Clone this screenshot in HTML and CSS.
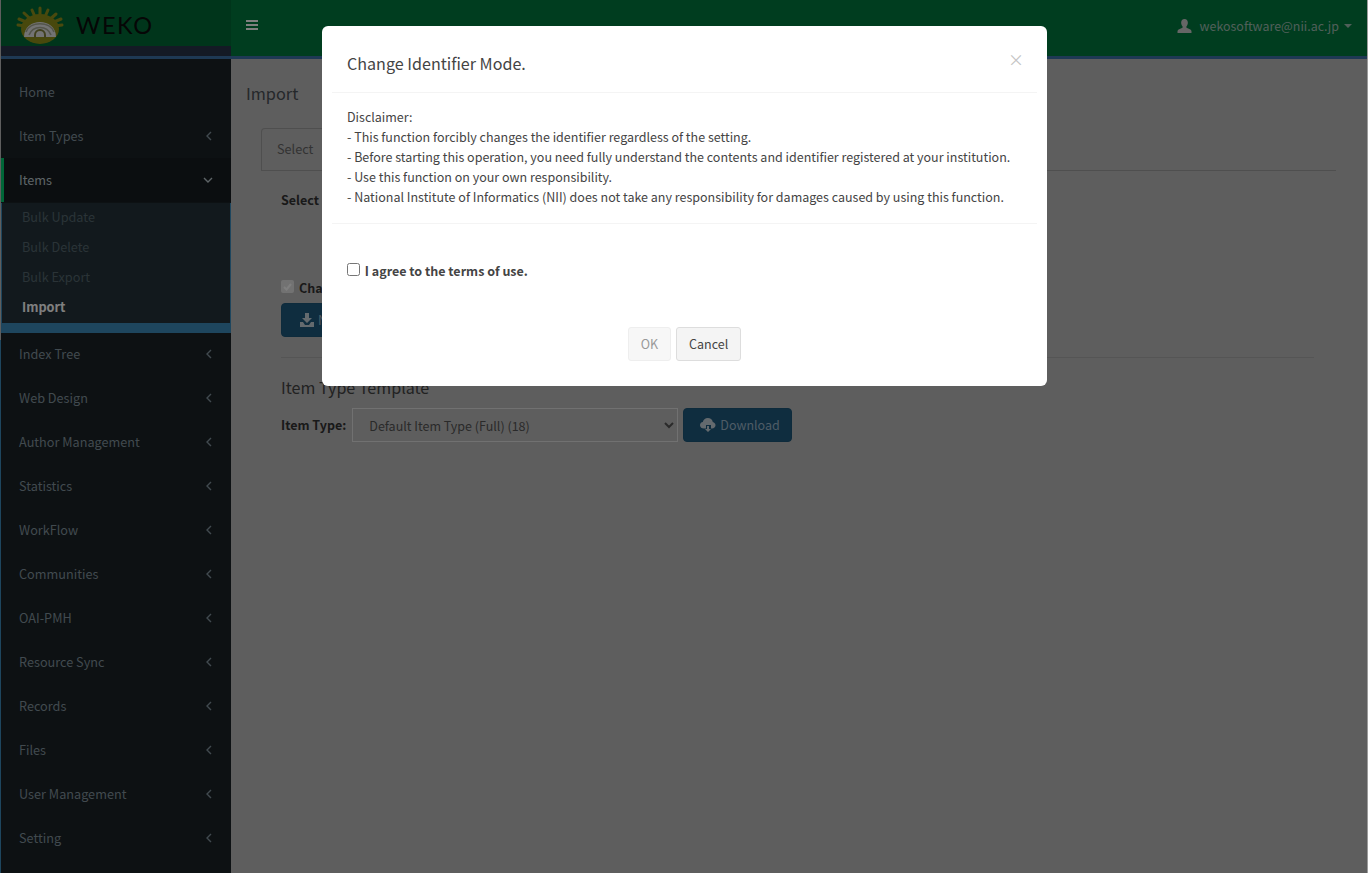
FILE: index.html
```html
<!DOCTYPE html>
<html lang="en">
<head>
  <meta charset="UTF-8" />
  <title>WEKO - Import</title>
  <link rel="stylesheet" href="styles.css">
</head>
<body>
  <div class="app">
    <div class="edge"></div>

    <aside class="sidebar">
      <div class="logo-block">
        <svg class="logo-mark" width="48" height="38" viewBox="0 0 48 38">
          <g stroke="#93931c" stroke-width="3" stroke-linecap="round">
            <path d="M24 22 3 13M24 22 8 7M24 22 16 4M24 22V2M24 22 32 4M24 22 40 8M24 22 45 13M24 22 46 19M24 22 2 19" />
          </g>
          <ellipse cx="24" cy="23" rx="19" ry="15" fill="#909018" />
          <path d="M8 31C8 11 40 11 40 31Z" fill="#e6e6e6" />
          <path d="M10 26C14 15 34 15 38 26M13 29C17 19 31 19 35 29" fill="none" stroke="#a8ab96" stroke-width="1.6" />
          <path d="M19 32v-3a5 5 0 0 1 10 0v3" fill="none" stroke="#80803c" stroke-width="2" />
        </svg>
        <span class="logo-text">WEKO</span>
      </div>
      <div class="logo-strip"></div>

      <ul class="menu">
        <li class="menu-item">Home</li>
        <li class="menu-item">Item Types <svg class="chev" width="8" height="10" viewBox="0 0 8 10"><path d="M6 1 2 5l4 4" /></svg></li>
        <li class="menu-item active">Items <svg class="chev" width="10" height="8" viewBox="0 0 10 8"><path d="M1 2l4 4 4-4" /></svg></li>
        <li>
          <ul class="submenu">
            <li>Bulk Update</li>
            <li>Bulk Delete</li>
            <li>Bulk Export</li>
            <li class="current">Import</li>
          </ul>
        </li>
        <li class="menu-item">Index Tree <svg class="chev" width="8" height="10" viewBox="0 0 8 10"><path d="M6 1 2 5l4 4" /></svg></li>
        <li class="menu-item">Web Design <svg class="chev" width="8" height="10" viewBox="0 0 8 10"><path d="M6 1 2 5l4 4" /></svg></li>
        <li class="menu-item">Author Management <svg class="chev" width="8" height="10" viewBox="0 0 8 10"><path d="M6 1 2 5l4 4" /></svg></li>
        <li class="menu-item">Statistics <svg class="chev" width="8" height="10" viewBox="0 0 8 10"><path d="M6 1 2 5l4 4" /></svg></li>
        <li class="menu-item">WorkFlow <svg class="chev" width="8" height="10" viewBox="0 0 8 10"><path d="M6 1 2 5l4 4" /></svg></li>
        <li class="menu-item">Communities <svg class="chev" width="8" height="10" viewBox="0 0 8 10"><path d="M6 1 2 5l4 4" /></svg></li>
        <li class="menu-item">OAI-PMH <svg class="chev" width="8" height="10" viewBox="0 0 8 10"><path d="M6 1 2 5l4 4" /></svg></li>
        <li class="menu-item">Resource Sync <svg class="chev" width="8" height="10" viewBox="0 0 8 10"><path d="M6 1 2 5l4 4" /></svg></li>
        <li class="menu-item">Records <svg class="chev" width="8" height="10" viewBox="0 0 8 10"><path d="M6 1 2 5l4 4" /></svg></li>
        <li class="menu-item">Files <svg class="chev" width="8" height="10" viewBox="0 0 8 10"><path d="M6 1 2 5l4 4" /></svg></li>
        <li class="menu-item">User Management <svg class="chev" width="8" height="10" viewBox="0 0 8 10"><path d="M6 1 2 5l4 4" /></svg></li>
        <li class="menu-item">Setting <svg class="chev" width="8" height="10" viewBox="0 0 8 10"><path d="M6 1 2 5l4 4" /></svg></li>
      </ul>
    </aside>

    <div class="main">
      <header class="topbar">
        <svg class="burger" width="12" height="10" viewBox="0 0 12 10"><path d="M0 1h12M0 5h12M0 9h12" /></svg>
        <div class="user">
          <svg class="user-icon" width="15" height="14" viewBox="0 0 16 15"><path d="M8 0c2.300 0 3.600 1.700 3.600 4 0 1.600-.7 3-1.500 3.800v1.500c2.500.9 5.400 1.800 5.400 3.700V15H.5v-2c0-1.900 2.900-2.800 5.400-3.700V7.800C5.100 7 4.400 5.600 4.400 4 4.400 1.700 5.700 0 8 0z" /></svg>
          <span>wekosoftware@nii.ac.jp</span>
          <span class="caret"></span>
        </div>
      </header>

      <section class="content">
        <h1 class="page-title">Import</h1>
        <div class="tabs">
          <div class="tab">Select</div>
        </div>
        <div class="pane">
          <div class="select-row"><b>Select File:</b></div>
          <div class="change-row">
            <span class="check-box"><svg width="11" height="11" viewBox="0 0 11 11"><path d="M2 6l2.500 2.500L9 3" /></svg></span>
            <b>Change Identifier Mode.</b>
          </div>
          <button class="btn-blue next-btn" type="button">
            <svg width="14" height="14" viewBox="0 0 14 14"><path d="M5 0h4v5h3L7 10 2 5h3zM0 9h3l2 3h4l2-3h3v5H0z" /></svg>
            Next
          </button>
          <hr class="rule" />
          <h2 class="sub-title">Item Type Template</h2>
          <div class="template-row">
            <b class="type-label">Item Type:</b>
            <select class="type-select">
              <option>Default Item Type (Full) (18)</option>
            </select>
            <button class="btn-blue" type="button">
              <svg width="16" height="14" viewBox="0 0 16 14"><path d="M4 10.500C1.800 10.500 0 9.200 0 7.200 0 5.500 1.200 4.300 2.800 4.100 3.200 1.800 5.200 0 7.800 0c2.500 0 4.500 1.600 5 3.900 1.500.3 2.700 1.600 2.700 3.300 0 1.900-1.600 3.300-3.500 3.300H11V7H6v3.500zM7 8h2v3h2l-3 3-3-3h2z" /></svg>
              Download
            </button>
          </div>
        </div>
      </section>
    </div>
  </div>

  <div class="backdrop"></div>

  <div class="modal">
    <div class="modal-head">
      <h4 class="modal-title">Change Identifier Mode.</h4>
      <span class="modal-close">&times;</span>
    </div>
    <div class="modal-body">
      Disclaimer:<br>
      - This function forcibly changes the identifier regardless of the setting.<br>
      - Before starting this operation, you need fully understand the contents and identifier registered at your institution.<br>
      - Use this function on your own responsibility.<br>
      - National Institute of Informatics (NII) does not take any responsibility for damages caused by using this function.
    </div>
    <div class="modal-agree">
      <label class="agree"><input type="checkbox" /> <b>I agree to the terms of use.</b></label>
    </div>
    <div class="modal-foot">
      <button class="btn-plain disabled" type="button">OK</button>
      <button class="btn-plain" type="button">Cancel</button>
    </div>
  </div>
</body>
</html>
```

FILE: styles.css
```css
* {
  box-sizing: border-box;
}

html, body {
  height: 100%;
}

body {
  margin: 0;
  overflow: hidden;
  background: #9c9c9c;
  color: #333;
  font-family: "Noto Sans CJK JP", "Open Sans", sans-serif;
  font-size: 12.7px;
  line-height: 20px;
}

ul {
  list-style: none;
  margin: 0;
  padding: 0;
}

.app {
  display: flex;
  height: 873px;
  padding-right: 1px;
}

.edge {
  width: 1px;
  background: linear-gradient(#bcbcbc 0 340px, #3c8dbc 340px);
}

/* sidebar */
.sidebar {
  width: 230px;
  flex: none;
  background: #1a2226;
}

.logo-block {
  display: flex;
  align-items: center;
  height: 46px;
  padding: 6px 0 2px 15px;
  background: #006b36;
}

.logo-mark {
  flex: none;
}

.logo-text {
  margin-left: 12px;
  color: #0c0c0c;
  font-family: Lato, sans-serif;
  font-size: 23.5px;
  letter-spacing: 1.6px;
}

.logo-strip {
  height: 13px;
  background: #28344a;
  border-bottom: 3px solid #3c72a8;
}

.menu {
  padding-top: 11px;
}

.menu-item {
  display: flex;
  align-items: center;
  justify-content: space-between;
  height: 44px;
  padding: 0 18px;
  color: #83949e;
}

.menu-item.active {
  border-left: 3px solid #00cc70;
  padding-left: 15px;
  background: #161d20;
  color: #bdc9cf;
}

.chev {
  fill: none;
  stroke: currentColor;
  stroke-width: 1.4;
}

.submenu {
  height: 130px;
  margin: 1px 0 -1px;
  background: #24333a;
  border-left: 1px solid #3c8dbc;
  border-right: 1px solid #3c8dbc;
  border-bottom: 10px solid #3c8dbc;
}

.submenu li {
  height: 30px;
  padding-left: 20px;
  line-height: 28px;
  color: #55676f;
}

.submenu .current {
  color: #fff;
  font-weight: bold;
}

/* main area */
.main {
  flex: 1;
  min-width: 0;
  background: #bcbcbc;
}

.topbar {
  display: flex;
  align-items: center;
  justify-content: space-between;
  height: 59px;
  padding: 0 15px 4px;
  background: #007a3f;
  border-bottom: 3px solid #3c72a8;
}

.burger {
  margin-bottom: 2px;
  stroke: #fff;
  stroke-width: 2;
}

.user {
  display: flex;
  align-items: center;
  font-size: 12.45px;
  color: #a0bfb3;
}

.user-icon {
  margin-right: 8px;
  fill: #ccc;
}

.caret {
  margin-left: 5px;
  border-top: 4px solid #a0bfb3;
  border-left: 4px solid transparent;
  border-right: 4px solid transparent;
}

.content {
  padding: 24px 31px 0 15px;
}

.page-title {
  margin: 0;
  font-size: 16.3px;
  font-weight: normal;
  line-height: 20px;
  color: #4a5056;
}

.tabs {
  display: flex;
  height: 43px;
  margin: 25px 0 0 15px;
  border-bottom: 1px solid #9e9e9e;
}

.tab {
  width: 75px;
  padding: 10px 15px;
  border: 1px solid #9e9e9e;
  border-bottom: 0;
  border-radius: 4px 4px 0 0;
  color: #666;
}

.pane {
  padding: 19px 22px 0 35px;
  font-size: 12.5px;
}

.select-row {
  height: 85px;
}

.change-row {
  display: flex;
  align-items: center;
  gap: 5px;
  height: 26px;
  margin-bottom: 2px;
}

.check-box {
  display: flex;
  width: 13px;
  height: 13px;
  margin-top: -3px;
  align-items: center;
  justify-content: center;
  border-radius: 2px;
  background: #e4e4e4;
}

.check-box svg {
  fill: none;
  stroke: #fff;
  stroke-width: 2;
}

.btn-blue {
  display: inline-flex;
  align-items: center;
  gap: 4px;
  height: 34px;
  padding: 0 11px 0 16px;
  border: 1px solid #1c5678;
  border-radius: 4px;
  background: #1f5a7e;
  color: #9cb8cc;
  font: inherit;
}

.btn-blue svg {
  fill: #c8d4dc;
}

.next-btn {
  width: 120px;
  padding-left: 18px;
}

.rule {
  margin: 20px 0 0;
  border: 0;
  border-top: 1px solid #aaa;
}

.sub-title {
  margin: 19px 0 0;
  font-size: 16.1px;
  font-weight: normal;
  line-height: 20px;
  color: #444;
}

.template-row {
  display: flex;
  align-items: center;
  gap: 5px;
  margin-top: 11px;
}

.type-label {
  margin-right: 1px;
}

.type-select {
  width: 326px;
  height: 34px;
  padding: 0 12px;
  border: 1px solid #e2e2e2;
  border-radius: 0;
  background: #bcbcbc;
  color: #555;
  font: inherit;
}

/* modal */
.backdrop {
  position: fixed;
  top: 0;
  left: 0;
  right: 1px;
  bottom: 0;
  background: rgba(0, 0, 0, 0.5);
}

.modal {
  position: fixed;
  top: 26px;
  left: 322px;
  width: 725px;
  height: 360px;
  border-radius: 6px;
  background: #fff;
  color: #444;
  font-size: 12.5px;
}

.modal-head {
  display: flex;
  justify-content: space-between;
  height: 67px;
  margin: 0 10px;
  padding: 27px 13px 0 15px;
  border-bottom: 1px solid #f4f4f4;
}

.modal-title {
  margin: 0;
  font-size: 16.1px;
  font-weight: normal;
  line-height: 20px;
}

.modal-close {
  margin-top: -4px;
  color: #c4c4c4;
  font-size: 16px;
}

.modal-body {
  height: 131px;
  margin: 0 10px;
  padding: 14px 15px 0;
  border-bottom: 1px solid #f4f4f4;
}

.modal-agree {
  height: 103px;
  padding: 37px 25px 0;
}

.agree input {
  margin: 0 2px 0 0;
  width: 13px;
  height: 13px;
  vertical-align: 0;
}

.modal-foot {
  display: flex;
  justify-content: center;
  gap: 5px;
}

.btn-plain {
  height: 34px;
  padding: 0 12px;
  border: 1px solid #ddd;
  border-radius: 3px;
  background: #f4f4f4;
  color: #444;
  font: inherit;
}

.btn-plain.disabled {
  background: #f7f7f7;
  border-color: #eee;
  color: #999;
}
```
